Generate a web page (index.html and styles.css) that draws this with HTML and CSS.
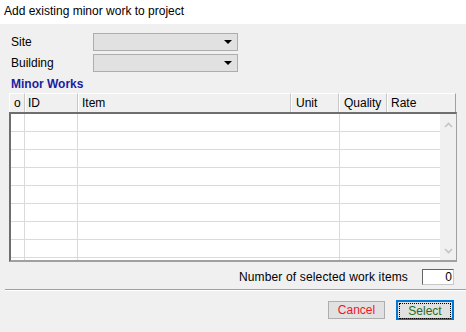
FILE: index.html
```html
<!DOCTYPE html>
<html lang="en">
  <head>
    <meta charset="UTF-8" />
    <title>Add existing minor work to project</title>
    <link rel="stylesheet" href="styles.css">
  </head>
  <body>
    <div class="window">
      <div class="titlebar">Add existing minor work to project</div>
      <div class="content">
        <div class="field-row">
          <label class="field-label">Site</label>
          <div class="combo"><span class="combo-arrow"></span></div>
        </div>
        <div class="field-row">
          <label class="field-label">Building</label>
          <div class="combo"><span class="combo-arrow"></span></div>
        </div>
        <div class="section-title">Minor Works</div>

        <div class="grid">
          <div class="grid-head">
            <div class="hcell c-o">o</div>
            <div class="hcell c-id">ID</div>
            <div class="hcell c-item">Item</div>
            <div class="hcell c-unit">Unit</div>
            <div class="hcell c-qual">Quality</div>
            <div class="hcell c-rate">Rate</div>
          </div>
          <div class="grid-body">
            <div class="rows">
              <div class="row"><div></div><div></div><div></div><div></div></div>
              <div class="row"><div></div><div></div><div></div><div></div></div>
              <div class="row"><div></div><div></div><div></div><div></div></div>
              <div class="row"><div></div><div></div><div></div><div></div></div>
              <div class="row"><div></div><div></div><div></div><div></div></div>
              <div class="row"><div></div><div></div><div></div><div></div></div>
              <div class="row"><div></div><div></div><div></div><div></div></div>
              <div class="row"><div></div><div></div><div></div><div></div></div>
              <div class="row"><div></div><div></div><div></div><div></div></div>
            </div>
            <div class="scrollbar">
              <svg width="9" height="6" viewBox="0 0 9 6"><polyline points="1,5 4.5,1.5 8,5" fill="none" stroke="#c4c4c4" stroke-width="1.6"/></svg>
              <svg width="9" height="6" viewBox="0 0 9 6"><polyline points="1,1 4.5,4.5 8,1" fill="none" stroke="#c4c4c4" stroke-width="1.6"/></svg>
            </div>
          </div>
        </div>

        <div class="count-row">
          <span class="count-label">Number of selected work items</span>
          <div class="count-box">0</div>
        </div>
      </div>

      <div class="separator"></div>

      <div class="buttons">
        <button class="btn btn-cancel">Cancel</button>
        <button class="btn btn-select"><span class="focus">Select</span></button>
      </div>
    </div>
  </body>
</html>
```

FILE: styles.css
```css
body {
  margin: 0;
  background-color: #f0f0f0;
  font-family: "Liberation Sans", Arial, sans-serif;
  font-size: 12px;
  color: #000;
}
.window {
  width: 466px;
  height: 332px;
  overflow: hidden;
}
.titlebar {
  height: 24px;
  line-height: 23px;
  padding-left: 4px;
  background-color: #fff;
  font-size: 12px;
}
.content {
  padding: 9px 0 0 9px;
}
.field-row {
  display: flex;
  align-items: center;
  height: 18px;
  margin-bottom: 3px;
}
.field-label {
  width: 82px;
  padding-left: 2px;
}
.combo {
  position: relative;
  width: 143px;
  height: 16px;
  background-color: #e1e1e1;
  border: 1px solid #adadad;
}
.combo-arrow {
  position: absolute;
  right: 5px;
  top: 6px;
  border-left: 4px solid transparent;
  border-right: 4px solid transparent;
  border-top: 4px solid #000;
}
.section-title {
  height: 18px;
  line-height: 18px;
  padding-left: 2px;
  color: #1c1ca0;
  font-weight: bold;
}
.grid {
  width: 448px;
}
.grid-head {
  display: flex;
  height: 19px;
}
.hcell {
  height: 19px;
  line-height: 19px;
  padding-left: 3px;
  box-sizing: border-box;
  border-right: 1px solid #c8c8c8;
  border-top: 1px solid #fff;
  border-left: 1px solid #fff;
}
.c-o { width: 16px; padding-left: 4px; }
.c-id { width: 53px; padding-left: 2px; }
.c-item { width: 213px; }
.c-unit { width: 48px; padding-left: 4px; }
.c-qual { width: 48px; padding-left: 4px; }
.c-rate { width: 69px; padding-left: 3px; border-right: 1px solid #a0a0a0; }
.grid-body {
  display: flex;
  height: 146px;
  background-color: #fff;
  border-top: 2px solid #6e6e6e;
  border-left: 2px solid #6e6e6e;
  border-right: 1px solid #a0a0a0;
  border-bottom: 2px solid #a0a0a0;
  overflow: hidden;
}
.rows {
  width: 429px;
}
.row {
  display: grid;
  grid-template-columns: 14px 53px 262px 100px;
  height: 18px;
  border-bottom: 1px solid #dadada;
  box-sizing: border-box;
}
.row div {
  border-right: 1px solid #dadada;
}
.row div:last-child {
  border-right: none;
}
.scrollbar {
  width: 16px;
  background-color: #f0f0f0;
  display: flex;
  flex-direction: column;
  justify-content: space-between;
  align-items: center;
  padding: 8px 0 6px;
}
.count-row {
  display: flex;
  align-items: center;
  justify-content: flex-end;
  width: 445px;
  margin-top: 6px;
  height: 17px;
}
.count-label {
  letter-spacing: 0.15px;
}
.count-box {
  width: 29px;
  height: 14px;
  line-height: 14px;
  margin-left: 14px;
  padding-right: 1px;
  text-align: right;
  background-color: #fff;
  border-top: 1px solid #646464;
  border-left: 1px solid #646464;
  border-right: 1px solid #c8c8c8;
  border-bottom: 1px solid #c8c8c8;
}
.separator {
  margin: 4px 0 0 5px;
  height: 1px;
  background-color: #a0a0a0;
  border-bottom: 1px solid #fff;
}
.buttons {
  display: flex;
  justify-content: flex-end;
  align-items: center;
  padding: 9px 12px 0 0;
  gap: 11px;
}
.btn {
  font-family: "Liberation Sans", Arial, sans-serif;
  font-size: 12px;
  height: 18px;
  width: 57px;
  padding: 0;
  background-color: #e1e1e1;
  border: 1px solid #adadad;
}
.btn-cancel {
  color: #f0142a;
}
.btn-select {
  height: 20px;
  width: 58px;
  border: 2px solid #0078d7;
  color: #1e6e1e;
  padding: 1px;
}
.btn-select .focus {
  display: block;
  height: 14px;
  line-height: 14px;
  border: 1px dotted #000;
}
```
